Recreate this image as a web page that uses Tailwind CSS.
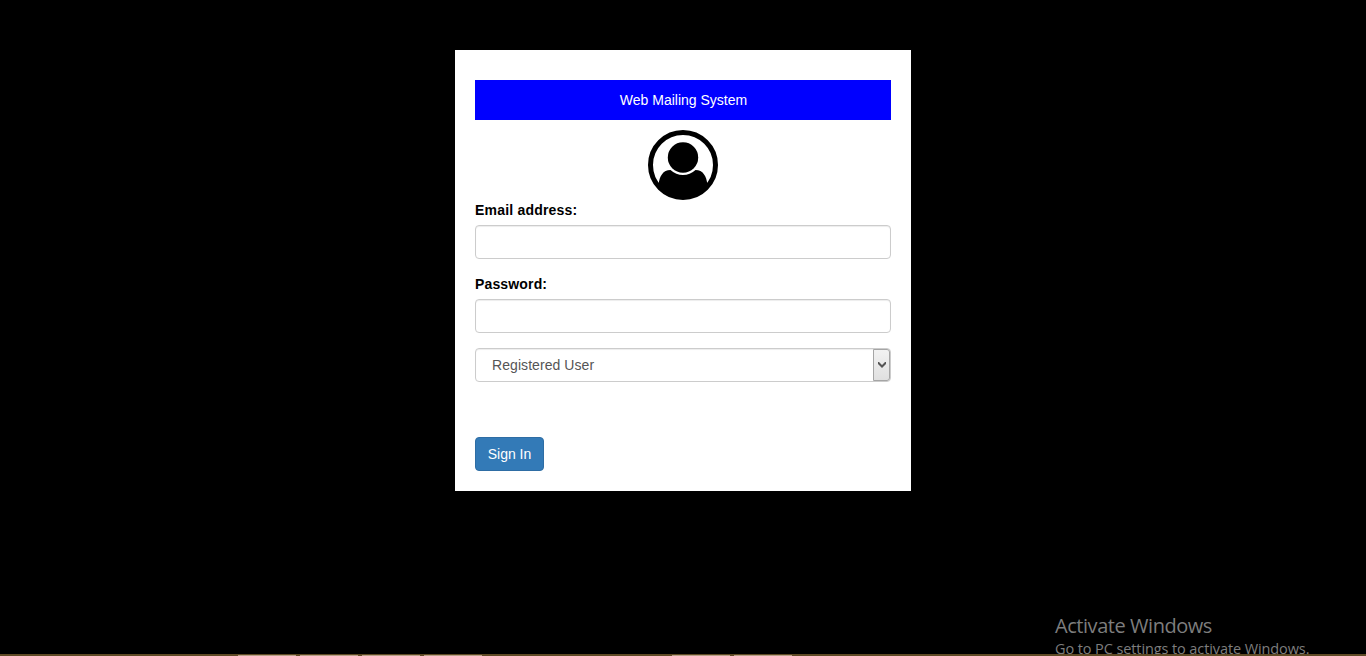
<!DOCTYPE html>
<html lang="en">
<head>
<meta charset="utf-8">
<title>Web Mailing System</title>
<script src="https://cdn.jsdelivr.net/npm/@tailwindcss/browser@4"></script>
</head>
<body class="bg-black h-[656px] overflow-hidden relative font-['Liberation_Sans',Arial,sans-serif] text-sm leading-5 text-black">
<main class="pt-[50px] flex justify-center">
  <form class="w-[456px] h-[441px] bg-white px-5 pt-[30px] flex flex-col">
    <h1 class="h-10 shrink-0 bg-[#0000ff] text-white flex items-center justify-center pl-px">Web Mailing System</h1>
    <svg class="w-[70px] h-[70px] shrink-0 mt-2.5 mx-auto" viewBox="0 0 70 70">
      <circle cx="35" cy="35" r="32.5" fill="#fff" stroke="#000" stroke-width="5"/>
      <path d="M10.500 55C11.500 46 15 40 22.500 40Q28 45 35 45T47.500 40C55 40 58.500 46 59.500 55Q50 67 35 67T10.500 55Z"/>
      <circle cx="35" cy="27.500" r="15.200"/>
    </svg>
    <label class="font-bold mb-[5px] tracking-[0.2px]" for="email">Email address:</label>
    <input id="email" type="email" class="h-[34px] shrink-0 border border-[#ccc] rounded px-3 shadow-[inset_0_1px_1px_rgba(0,0,0,0.075)] mb-[15px]">
    <label class="font-bold mb-[5px] tracking-[0.15px]" for="password">Password:</label>
    <input id="password" type="password" class="h-[34px] shrink-0 border border-[#ccc] rounded px-3 shadow-[inset_0_1px_1px_rgba(0,0,0,0.075)] mb-[15px]">
    <div class="h-[34px] shrink-0 border border-[#ccc] rounded shadow-[inset_0_1px_1px_rgba(0,0,0,0.075)] flex items-stretch justify-between pl-4 text-[#555]">
      <span class="leading-8 tracking-[0.07px]">Registered User</span>
      <span class="w-[17px] border border-[#a5a5a5] rounded-r-[3px] bg-linear-to-b from-[#f2f2f2] to-[#e0e0e0] flex items-center justify-center">
        <svg class="w-[8px] h-[6px]" viewBox="0 0 8 6"><path d="M0 0H1L4 3L7 0H8V2L4 6L0 2Z" fill="#555"/></svg>
      </span>
    </div>
    <button type="button" class="mt-[55px] w-[69px] h-[34px] shrink-0 rounded border border-[#2e6da4] bg-[#337ab7] text-white">Sign In</button>
  </form>
</main>
<aside class="absolute left-[1055px] top-[612px] font-['Open_Sans','Noto_Sans',sans-serif] text-[#7d7d7d] whitespace-nowrap">
  <p class="text-[20px] leading-7 tracking-[-0.45px]">Activate Windows</p>
  <p class="text-[14.5px] leading-[18px] tracking-[-0.1px]">Go to PC settings to activate Windows.</p>
</aside>
<footer class="absolute inset-x-0 bottom-0 h-0.5 bg-[#5e4a25] pt-px pl-[238px] flex gap-1">
  <i class="w-[58px] h-px bg-[#b8a088]"></i>
  <i class="w-[58px] h-px bg-[#b8a088]"></i>
  <i class="w-[58px] h-px bg-[#b8a088]"></i>
  <i class="w-[58px] h-px bg-[#b8a088]"></i>
  <i class="w-[58px] h-px bg-[#b8a088] ml-[186px]"></i>
  <i class="w-[58px] h-px bg-[#b8a088]"></i>
</footer>
</body>
</html>
